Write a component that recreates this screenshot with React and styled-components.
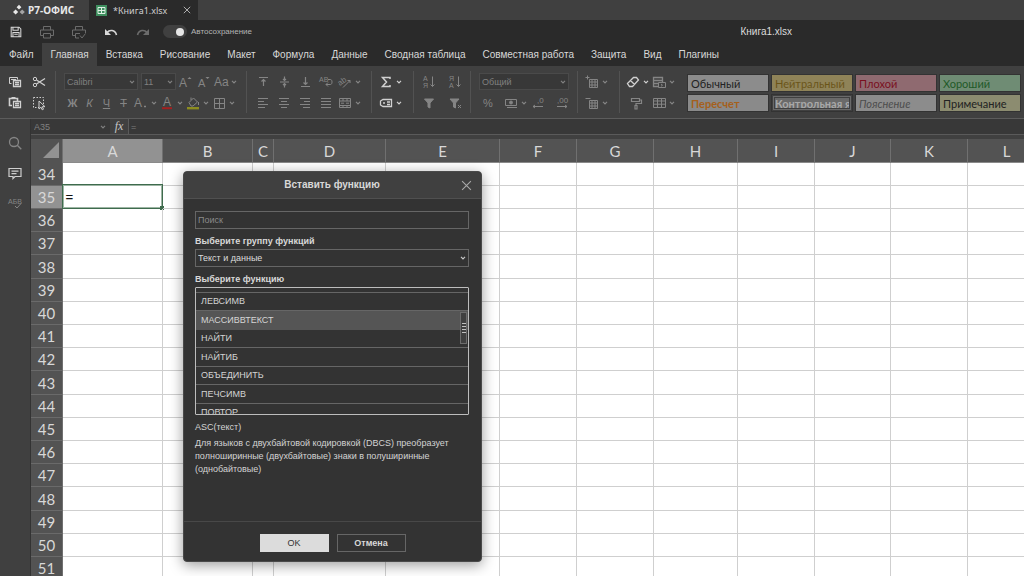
import React from 'react';
import styled, { createGlobalStyle, css } from 'styled-components';

const Global = createGlobalStyle`
  *, *::before, *::after { box-sizing: border-box; }
  body { margin: 0; background: #404040; font-family: "Liberation Sans", Arial, sans-serif; font-size: 10px; color: #d8d8d8; }
  button, input, select { font-family: inherit; font-size: inherit; color: inherit; margin: 0; }
`;

const Page = styled.div`
  position: relative;
  display: flex;
  flex-direction: column;
  height: 100vh;
  min-height: 570px;
  overflow: hidden;
`;

const Plain = styled.button`
  border: 0;
  padding: 0;
  background: none;
  display: inline-flex;
  align-items: center;
  justify-content: center;
  color: inherit;
`;

/* window tabs */
const TabStrip = styled.div`
  display: flex;
  height: 20px;
  flex: none;
  background: #404040;
`;
const Brand = styled.div`
  display: flex;
  align-items: center;
  gap: 3px;
  width: 89px;
  padding-left: 13px;
  font: 700 10px "Noto Sans", sans-serif;
  color: #e8e8e8;
`;
const DocTab = styled.div`
  display: flex;
  align-items: center;
  width: 109px;
  padding: 0 7px;
  background: #2a2a2a;
  font: 9px "Noto Sans", sans-serif;
  color: #cfcfcf;
`;
const DocName = styled.span`
  flex: 1;
  padding-left: 6px;
`;

/* quick access */
const QuickBar = styled.div`
  display: flex;
  align-items: center;
  height: 23px;
  flex: none;
  background: #2a2a2a;
`;
const QuickButton = styled(Plain)`
  width: 32px;
  height: 22px;
  color: ${p => (p.$dim ? '#6c6c6c' : '#d8d8d8')};
  &:first-child { width: 31px; }
`;
const SwitchLabel = styled.label`
  display: flex;
  align-items: center;
  gap: 4px;
  margin-left: 4px;
  font-size: 8px;
  color: #b4b4b4;
`;
const Switch = styled.input`
  appearance: none;
  margin: 0;
  width: 24px;
  height: 13px;
  border-radius: 7px;
  background: #404040;
  display: flex;
  align-items: center;
  justify-content: flex-end;
  padding: 0 3px;
  &::before { content: ''; width: 8px; height: 8px; border-radius: 50%; background: #e6e6e6; }
`;
const FileTitle = styled.div`
  margin-left: auto;
  padding-right: 232px;
  color: #dcdcdc;
`;

/* menu */
const Menu = styled.nav`
  display: flex;
  height: 23px;
  flex: none;
  background: #2a2a2a;
`;
const MenuTab = styled(Plain)`
  padding: 0 8px 0 9px;
  white-space: nowrap;
  color: #d8d8d8;
  background: ${p => (p.$active ? '#404040' : 'none')};
`;

/* ribbon */
const Ribbon = styled.div`
  display: flex;
  height: 53px;
  flex: none;
  padding: 5px 4px 5px 0;
  background: #404040;
  border-bottom: 1px solid #5c5c5c;
`;
const Group = styled.div`
  display: flex;
  flex-direction: column;
  flex: none;
  padding: 0 ${p => p.$r}px 0 ${p => p.$l}px;
  border-right: ${p => (p.$last ? 0 : '1px solid #525252')};
`;
const ToolRow = styled.div`
  display: flex;
  align-items: center;
  height: 22px;
`;
const Tool = styled(Plain)`
  width: ${p => p.$w}px;
  height: 20px;
  gap: 2px;
  color: ${p => (p.$on ? '#d0d0d0' : '#858585')};
  ${p => p.$caret && css`justify-content: flex-end; padding-right: 1px;`}
`;
const FieldBox = styled.span`
  position: relative;
  display: inline-flex;
  width: ${p => p.$w}px;
  margin-right: ${p => p.$gap || 0}px;
`;
const FieldSelect = styled.select`
  appearance: none;
  width: 100%;
  height: 17px;
  padding: 0 2px;
  border: 1px solid #4a4a4a;
  border-radius: 0;
  background: #383838;
  color: #808080;
  font-size: 9px;
`;
const FieldCaret = styled.span`
  position: absolute;
  right: ${p => p.$right || 3}px;
  top: 0;
  bottom: 0;
  display: flex;
  align-items: center;
  color: ${p => p.$color || '#808080'};
  pointer-events: none;
`;
const Styles = styled.div`
  flex: 1;
  display: grid;
  grid-template-columns: repeat(4, minmax(0, 1fr));
  grid-template-rows: 16px 16px;
  gap: 4px;
  padding-top: 4px;
`;
const StyleTile = styled(Plain)`
  justify-content: flex-start;
  padding-left: 3px;
  overflow: hidden;
  white-space: nowrap;
  font: ${p => p.$font || ''} 11px Lato, sans-serif;
  color: ${p => p.$fg};
  background: ${p => p.$bg};
  outline: 1px solid #333;
  ${p => p.$double && css`border: 3px double #404040; padding-left: 0;`}
`;

/* workspace */
const Work = styled.div`
  display: flex;
  flex: 1;
  min-height: 0;
`;
const Rail = styled.aside`
  display: flex;
  flex-direction: column;
  align-items: center;
  width: 31px;
  flex: none;
  padding-top: 9px;
  background: #404040;
  border-right: 1px solid #333;
`;
const RailButton = styled(Plain)`
  width: 30px;
  height: 30px;
  color: ${p => (p.$on ? '#cfcfcf' : '#858585')};
`;
const Main = styled.main`
  flex: 1;
  min-width: 0;
  overflow: hidden;
  background: #fff;
`;
const FormulaBar = styled.div`
  display: flex;
  align-items: center;
  height: 16px;
  background: #383838;
  border-bottom: 1px solid #5a5a5a;
  color: #808080;
  font-size: 9px;
`;
const NameBox = styled.input`
  width: 100%;
  height: 15px;
  border: 0;
  padding: 0 3px;
  background: none;
`;
const Fx = styled(Plain)`
  width: 18px;
  height: 15px;
  background: #404040;
  font: italic 12px "Liberation Serif", serif;
  color: #c8c8c8;
`;
const FormulaInput = styled.input`
  flex: 1;
  height: 15px;
  border: 0;
  border-left: 1px solid #5a5a5a;
  padding: 0 2px;
  background: none;
`;
const Sheet = styled.table`
  width: 1015px;
  min-width: 100%;
  border-top: 4px solid #404040;
  border-collapse: separate;
  border-spacing: 0;
  table-layout: fixed;
  font-family: Lato, sans-serif;
  font-size: 15px;
  tr { height: 23px; }
  thead tr { height: 24px; }
  tbody tr:nth-child(5n) { height: 24px; }
`;
const Head = styled.th`
  padding: 0;
  line-height: 20px;
  font-weight: 400;
  background: ${p => (p.$sel ? '#929292' : '#535353')};
  color: #d8d8d8;
  border-right: 1px solid #707070;
  border-bottom: 1px solid ${p => (p.scope === 'row' ? '#6a6a6a' : '#8a8a8a')};
`;
const Corner = styled.td`
  padding: 0 3px 3px;
  background: #535353;
  border-right: 1px solid #707070;
  svg { display: block; margin-left: auto; }
`;
const Cell = styled.td`
  position: relative;
  padding: 0 2px;
  line-height: 20px;
  color: #111;
  border-right: 1px solid #cfcfcf;
  border-bottom: 1px solid #cfcfcf;
  ${p => p.$active && css`
    &::before { content: ''; position: absolute; inset: -2px -1px -1px -1px; border: 1px solid #3f6b4d; box-shadow: inset 0 0 0 1px #9db5a4; }
    &::after { content: ''; position: absolute; right: -2px; bottom: -2px; width: 4px; height: 4px; background: #3f6b4d; }
  `}
`;

/* dialog */
const Dialog = styled.section`
  position: absolute;
  left: 183px;
  top: 171px;
  width: 299px;
  height: 391px;
  display: flex;
  flex-direction: column;
  border-radius: 4px;
  background: #333;
  border: 1px solid #4a4a4a;
  box-shadow: 0 3px 14px rgba(0, 0, 0, 0.4);
  overflow: hidden;
`;
const DialogHead = styled.header`
  display: flex;
  align-items: center;
  height: 27px;
  flex: none;
  padding: 0 9px 0 19px;
  background: #404040;
  border-bottom: 1px solid #505050;
`;
const DialogTitle = styled.h1`
  flex: 1;
  margin: 0;
  font-size: 10px;
  line-height: 14px;
  text-align: center;
  color: #d8d8d8;
`;
const CloseButton = styled(Plain)`
  color: #a8a8a8;
`;
const DialogBody = styled.div`
  flex: 1;
  padding: 12px 12px 0 11px;
  font-size: 9px;
`;
const Search = styled.input`
  display: block;
  width: 100%;
  height: 18px;
  padding: 0 2px;
  border: 1px solid #666;
  background: none;
  &::placeholder { color: #8a8a8a; opacity: 1; }
`;
const Label = styled.label`
  display: block;
  margin-top: 6px;
  line-height: 12px;
  font-weight: 700;
  color: #d8d8d8;
`;
const GroupBox = styled.div`
  position: relative;
  margin-top: 2px;
`;
const GroupSelect = styled.select`
  appearance: none;
  display: block;
  width: 100%;
  height: 18px;
  padding: 0 2px;
  border: 1px solid #666;
  border-radius: 0;
  background: #333;
  color: #dcdcdc;
`;
const ListBox = styled.div`
  position: relative;
  height: 128px;
  margin-top: 2px;
  border: 1px solid #bdbdbd;
  border-radius: 1px;
  overflow: hidden;
`;
const List = styled.ul`
  margin: 0;
  padding: 0;
  list-style: none;
`;
const Item = styled.li`
  height: 18px;
  padding-left: 5px;
  line-height: 17px;
  color: #d4d4d4;
  background: ${p => (p.$sel ? '#555' : 'none')};
  border-bottom: 1px solid ${p => (p.$sel ? '#555' : '#666')};
  &:nth-child(odd) { height: 19px; line-height: 18px; }
  &:first-child { height: 5px; }
`;
const Thumb = styled.div`
  position: absolute;
  right: 1px;
  top: 24px;
  width: 7px;
  height: 32px;
  display: flex;
  align-items: center;
  justify-content: center;
  border: 1px solid #6c6c6c;
  background: #404040;
  color: #c0c0c0;
`;
const Text = styled.p`
  margin: ${p => p.$top}px 0 0;
  line-height: 13px;
  color: #d4d4d4;
`;
const DialogFoot = styled.footer`
  display: flex;
  justify-content: center;
  gap: 8px;
  height: 40px;
  flex: none;
  padding-top: 12px;
  border-top: 1px solid #484848;
`;
const DialogButton = styled(Plain)`
  width: 69px;
  height: 18px;
  border: 1px solid ${p => (p.$primary ? '#dcdcdc' : '#666')};
  background: ${p => (p.$primary ? '#dcdcdc' : 'none')};
  color: ${p => (p.$primary ? '#333' : '#d8d8d8')};
  font-size: 9px;
  font-weight: ${p => (p.$primary ? 400 : 700)};
`;

const Svg = ({ children, s = 16, w = s, h = s, vb = `0 0 ${w} ${h}` }) => (
  <svg width={w} height={h} viewBox={vb} fill="none" stroke="currentColor" strokeWidth="1" aria-hidden="true">
    {children}
  </svg>
);
const Caret = () => <Svg w={6} h={4}><path d="M1 .8 3 2.8 5 .8" strokeWidth="1.2" /></Svg>;
const T = ({ x, y, size = 11, children, ...rest }) => (
  <text x={x} y={y} fontSize={size} fill="currentColor" stroke="none" {...rest}>{children}</text>
);

const icons = {
  copy: <><path d="M4.5 9.500h-2v-6h8v2M4 5.500h5" /><path d="M6.500 6.500h7v6h-7zM8 8.500h4M8 10.500h4" strokeWidth="1.300" /></>,
  paste: <><path d="M5 10.500H2.500v-7h8V6M4.500 2.800h4" strokeWidth="1.600" /><path d="M6.500 6.500h7v6h-7zM8 8.500h4M8 10.500h4" strokeWidth="1.300" /></>,
  cut: <><circle cx="4" cy="5" r="1.700" /><circle cx="4" cy="11" r="1.700" /><path d="M5.500 6 14 11.500M5.500 10 14 4.500" strokeWidth="1.300" /></>,
  pick: <><path d="M2.500 2.500h10v10h-10z" strokeDasharray="1.500 1.500" /><path d="M8 6v8l2-1.800 1.200 2.600 1.300-.6-1.200-2.500H14z" fill="#404040" /></>,
  fontUp: <><T x="1" y="13" size="12">A</T><path d="M9.500 5h4L11.500 3z" fill="currentColor" stroke="none" /></>,
  fontDown: <><T x="2" y="13" size="11">A</T><path d="M9.500 3h4L11.500 5z" fill="currentColor" stroke="none" /></>,
  caseAa: <T x="1" y="12" size="12">Aa</T>,
  sub: <><T x="1" y="12" size="12">A</T><path d="M11 11.500h2" strokeWidth="1.500" /></>,
  color: <><T x="4" y="11" size="12">A</T><path d="M3 13.200h10" stroke="#a32020" strokeWidth="2" /></>,
  bucket: <><path d="M4 7.500 8.500 3l4 4-4.500 4h-2zM6 5V2.500M13.500 7v3" /><path d="M2 13.200h12" stroke="#8d8d20" strokeWidth="2.400" /></>,
  border: <path d="M3.500 3.500h10v10h-10zM8.500 3.500v10M3.500 8.500h10" />,
  top: <path d="M4 3.500h9M8.500 12V5M6.500 7.500l2-2 2 2" strokeWidth="1.200" />,
  middle: <path d="M4 8h9M8.500 2.500v4M8.500 13.500v-4M7 5l1.500 1.500L10 5M7 11l1.500-1.500L10 11" strokeWidth="1.200" />,
  bottom: <path d="M4 12.500h9M8.500 3v7M6.500 8.500l2 2 2-2" strokeWidth="1.200" />,
  wrap: <><T x="1" y="8" size="7">AB</T><path d="M10 5.500h2.500c2 0 2 5 0 5H8M10 8.500l-2 2 2 2" /></>,
  rotate: <><T x="1" y="10" size="8" transform="rotate(-35 5 8)">ab</T><path d="M6 13.500 13 6.500M10.500 6.500H13V9" /></>,
  left: <path d="M3 3.500h10M3 6.500h6M3 9.500h10M3 12.500h7" />,
  center: <path d="M3 3.500h10M5 6.500h6M3 9.500h10M5 12.500h6" />,
  right: <path d="M3 3.500h10M7 6.500h6M3 9.500h10M6 12.500h7" />,
  justify: <path d="M3 3.500h10M3 6.500h10M3 9.500h10M3 12.500h10" />,
  merge: <path d="M2.500 3.500h11v9h-11zM2.500 6h11M2.500 10.500h11M6 3.500V6M10 3.500V6M6 10.500v2M10 10.500v2M4 8.200h3M9 8.200h3" />,
  sum: <path d="M12 5V3.500H4.500L8.500 8l-4 4.500H12V11" strokeWidth="1.500" />,
  named: <><path d="M5 4.500h8.500v7H5L2.500 10V6z" strokeWidth="1.300" /><path d="M5 8h2M9 7h3M9 9.500h3" strokeWidth="1.300" /></>,
  sortAz: <><T x="2" y="7" size="7">А</T><T x="2" y="14" size="7">Я</T><path d="M11.500 2.500v10M9.500 10.500l2 2 2-2" /></>,
  sortZa: <><T x="2" y="7" size="7">Я</T><T x="2" y="14" size="7">А</T><path d="M11.500 2.500v10M9.500 10.500l2 2 2-2" /></>,
  filter: <path d="M3.500 4h9L9 8v5L7 12V8z" fill="currentColor" />,
  filterOff: <><path d="M3 4h9L8.500 8v5l-2-1V8z" fill="currentColor" /><path d="M11 10l3 3M14 10l-3 3" /></>,
  percent: <T x="3" y="12" size="11">%</T>,
  money: <><path d="M2.500 4.500h11v6h-11zM4 12.500h10" /><circle cx="8" cy="7.500" r="1.500" fill="currentColor" /></>,
  decLess: <><T x="7" y="8" size="8">,0</T><path d="M3 11.500h10M5 10l-2 1.500L5 13" /></>,
  decMore: <><T x="3" y="8" size="8">,00</T><path d="M3 11.500h10M11 10l2 1.500L11 13" /></>,
  insertCells: <path d="M5.500 5.500h8v8h-8zM5.500 8h8M5.500 11h8M8 5.500v8M11 5.500v8M1.500 3.500h4M3.500 1.500v4" />,
  deleteCells: <path d="M5.500 5.500h8v8h-8zM5.500 8h8M5.500 11h8M8 5.500v8M11 5.500v8M1.500 3.500h5" />,
  eraser: <path d="M2.500 9.500 8.500 3.500h3l2 2.500-6 6.500h-3zM5.500 6.500l4 4" strokeWidth="1.300" />,
  cond: <><path d="M2.500 3.500h9v9h-9zM2.500 6.500h9M2.500 9.500h5" strokeWidth="1.300" /><path d="M7.500 8.500h7v5h-7zM10 10l1.500 1.200L10 12.300" fill="#404040" /></>,
  brush: <path d="M3.500 3.500h8v3h-8zM11.500 5h2v3.500H8V10M7 10.500h2v3.500H7z" strokeWidth="1.200" />,
  table: <path d="M2.500 3.500h12v9h-12zM2.500 6h12M2.500 9.200h12M6.500 3.500v9M10.500 3.500v9" />,
  save: <path d="M2.500 2.500h9l2 2v9h-11zM4.500 2.500v3.500h6V2.500M4.500 13.500v-5h7v5M6 10.500h4" strokeWidth="1.200" />,
  print: <path d="M4.500 6V2.500h7V6M4.500 11.500h-3V6h13v5.500h-3M4.500 9.500h7v4.500h-7z" />,
  printQuick: <path d="M4.500 6V2.500h7V6M4.500 11.500h-3V6h13v3M8 14H4.500V9.500H9M9 11.500l2 2.500 3.500-4.500" />,
  undo: <><path d="M4 8.500C6.500 5.500 12 5.500 13.500 11" strokeWidth="1.600" /><path d="M2 5v6h6z" fill="currentColor" stroke="none" /></>,
  redo: <><path d="M12 8.500C9.500 5.500 4 5.500 2.500 11" strokeWidth="1.600" /><path d="M14 5v6H8z" fill="currentColor" stroke="none" /></>,
  search: <><circle cx="7" cy="7" r="4.500" strokeWidth="1.300" /><path d="m10.300 10.300 4 4" strokeWidth="1.300" /></>,
  comment: <path d="M2 3.500h12v8H8L6 13.500v-2H2zM4.500 6.200h7M4.500 8.700h5" strokeWidth="1.200" />,
  spell: <><T x="1" y="9" size="7">АБВ</T><path d="m8 11 2 2 4-4.500" /></>,
};
const Icon = ({ n }) => <Svg>{icons[n]}</Svg>;

const B = ({ n, w, caret, on, label, children }) => (
  <Tool type="button" $w={w} $caret={caret} $on={on} aria-label={label || n}>
    {children || <Icon n={n} />}
    {caret && <Caret />}
  </Tool>
);

const Letter = styled.span`
  font-size: 11px;
  font-weight: ${p => (p.$k === 'b' ? 700 : 400)};
  font-style: ${p => (p.$k === 'i' ? 'italic' : 'normal')};
  text-decoration: ${p => ({ u: 'underline', s: 'line-through' }[p.$k] || 'none')};
`;

const Field = ({ w, gap, label, value }) => (
  <FieldBox $w={w} $gap={gap}>
    <FieldSelect aria-label={label} defaultValue={value}><option>{value}</option></FieldSelect>
    <FieldCaret><Caret /></FieldCaret>
  </FieldBox>
);

const Cross = ({ s }) => <Svg s={s} vb="0 0 10 10"><path d="m1 1 8 8M9 1 1 9" /></Svg>;

const menu = ['Файл', 'Главная', 'Вставка', 'Рисование', 'Макет', 'Формула', 'Данные', 'Сводная таблица', 'Совместная работа', 'Защита', 'Вид', 'Плагины'];
const tiles = [
  { t: 'Обычный', fg: '#222', bg: '#8c8c8c' },
  { t: 'Нейтральный', fg: '#6b5518', bg: '#8f8358' },
  { t: 'Плохой', fg: '#7a1020', bg: '#8f6a70' },
  { t: 'Хороший', fg: '#1f5a28', bg: '#6f8c74' },
  { t: 'Пересчет', fg: '#a5601c', bg: '#8a8a8a', font: '700' },
  { t: 'Контрольная ячейка', fg: '#a8a8a8', bg: '#6a6a6a', font: '700', double: true },
  { t: 'Пояснение', fg: '#4c4c4c', bg: '#8c8c8c', font: 'italic' },
  { t: 'Примечание', fg: '#222', bg: '#8c8c70' },
];
const cols = [['A', 100], ['B', 90], ['C', 21], ['D', 112], ['E', 114], ['F', 77], ['G', 77], ['H', 84], ['I', 77], ['J', 76], ['K', 77], ['L', 78]];
const rows = Array.from({ length: 18 }, (_, i) => 34 + i);
const functions = ['', 'ЛЕВСИМВ', 'МАССИВВТЕКСТ', 'НАЙТИ', 'НАЙТИБ', 'ОБЪЕДИНИТЬ', 'ПЕЧСИМВ', 'ПОВТОР'];

export default function App() {
  return (
    <Page>
      <Global />
      <TabStrip>
        <Brand>
          <Svg w={12} h={12}>
            <g fill="currentColor" stroke="none">
              <path d="m6 .8 2.400 2.400L6 5.600 3.600 3.200zM2.600 5.400 5.200 8l-2.600 2.600L0 8z" />
              <path d="m9.200 5.400L11.800 8l-2.600 2.600L6.600 8z" opacity=".6" />
            </g>
          </Svg>
          Р7-ОФИС
        </Brand>
        <DocTab>
          <Svg s={11}><path d="M0 0h11v11H0z" fill="#3f8f5f" stroke="none" /><path d="M2 2.500h7v6H2zM5.500 2.500v6M2 5.500h7" stroke="#e0f0e6" /></Svg>
          <DocName>*Книга1.xlsx</DocName>
          <Plain type="button" aria-label="Закрыть вкладку"><Cross s={8} /></Plain>
        </DocTab>
      </TabStrip>
      <QuickBar>
        <QuickButton type="button" aria-label="Сохранить"><Svg s={14} vb="0 0 16 16">{icons.save}</Svg></QuickButton>
        <QuickButton type="button" $dim aria-label="Печать"><Icon n="print" /></QuickButton>
        <QuickButton type="button" $dim aria-label="Быстрая печать"><Icon n="printQuick" /></QuickButton>
        <QuickButton type="button" aria-label="Отменить"><Icon n="undo" /></QuickButton>
        <QuickButton type="button" $dim aria-label="Повторить"><Icon n="redo" /></QuickButton>
        <SwitchLabel><Switch type="checkbox" role="switch" defaultChecked />Автосохранение</SwitchLabel>
        <FileTitle>Книга1.xlsx</FileTitle>
      </QuickBar>
      <Menu>
        {menu.map(m => <MenuTab type="button" key={m} $active={m === 'Главная'}>{m}</MenuTab>)}
      </Menu>
      <Ribbon>
        <Group $l={3} $r={4}>
          <ToolRow><B n="copy" w={24} on /><B n="cut" w={24} on /></ToolRow>
          <ToolRow><B n="paste" w={24} on /><B n="pick" w={24} on /></ToolRow>
        </Group>
        <Group $l={8} $r={8}>
          <ToolRow>
            <Field w={74} gap={3} label="Шрифт" value="Calibri" />
            <Field w={35} label="Размер шрифта" value="11" />
            <B n="fontUp" w={19} /><B n="fontDown" w={17} /><B n="caseAa" w={26} caret />
          </ToolRow>
          <ToolRow>
            <B w={17} label="Полужирный"><Letter $k="b">Ж</Letter></B>
            <B w={17} label="Курсив"><Letter $k="i">К</Letter></B>
            <B w={17} label="Подчёркнутый"><Letter $k="u">Ч</Letter></B>
            <B w={17} label="Зачёркнутый"><Letter $k="s">Т</Letter></B>
            <B n="sub" w={26} caret /><B n="color" w={26} caret /><B n="bucket" w={26} caret /><B n="border" w={26} caret />
          </ToolRow>
        </Group>
        <Group $l={5} $r={9}>
          <ToolRow><B n="top" w={21} /><B n="middle" w={21} /><B n="bottom" w={21} /><B n="wrap" w={21} /><B n="rotate" w={26} caret /></ToolRow>
          <ToolRow><B n="left" w={21} /><B n="center" w={21} /><B n="right" w={21} /><B n="justify" w={21} /><B n="merge" w={26} caret /></ToolRow>
        </Group>
        <Group $l={5} $r={10}>
          <ToolRow><B n="sum" w={26} caret on /></ToolRow>
          <ToolRow><B n="named" w={26} caret on /></ToolRow>
        </Group>
        <Group $l={2} $r={2}>
          <ToolRow><B n="sortAz" w={26} /><B n="sortZa" w={26} /></ToolRow>
          <ToolRow><B n="filter" w={26} /><B n="filterOff" w={26} /></ToolRow>
        </Group>
        <Group $l={8} $r={1}>
          <ToolRow><Field w={90} label="Числовой формат" value="Общий" /></ToolRow>
          <ToolRow><B n="percent" w={17} /><B n="money" w={32} caret /><B n="decLess" w={20} /><B n="decMore" w={28} /></ToolRow>
        </Group>
        <Group $l={5} $r={10}>
          <ToolRow><B n="insertCells" w={26} caret /></ToolRow>
          <ToolRow><B n="deleteCells" w={26} caret /></ToolRow>
        </Group>
        <Group $l={4} $r={12} $last>
          <ToolRow><B n="eraser" w={26} caret on /><B n="cond" w={26} caret /></ToolRow>
          <ToolRow><B n="brush" w={23} /><B n="table" w={29} caret /></ToolRow>
        </Group>
        <Styles>
          {tiles.map(s => (
            <StyleTile type="button" key={s.t} $fg={s.fg} $bg={s.bg} $font={s.font} $double={s.double}>{s.t}</StyleTile>
          ))}
        </Styles>
      </Ribbon>
      <Work>
        <Rail>
          <RailButton type="button" aria-label="Поиск"><Icon n="search" /></RailButton>
          <RailButton type="button" $on aria-label="Комментарии"><Icon n="comment" /></RailButton>
          <RailButton type="button" aria-label="Проверка орфографии"><Icon n="spell" /></RailButton>
        </Rail>
        <Main>
          <FormulaBar>
            <FieldBox $w={78} $gap={1}>
              <NameBox aria-label="Имя ячейки" defaultValue="A35" />
              <FieldCaret><Caret /></FieldCaret>
            </FieldBox>
            <Fx type="button">fx</Fx>
            <FormulaInput aria-label="Строка формул" defaultValue="=" />
          </FormulaBar>
          <Sheet>
            <colgroup>
              <col width="32" />
              {cols.map(([c, w]) => <col key={c} width={w} />)}
            </colgroup>
            <thead>
              <tr>
                <Corner><Svg w={16} h={16}><path d="M16 0v16H0z" fill="#929292" stroke="none" /></Svg></Corner>
                {cols.map(([c]) => <Head scope="col" key={c} $sel={c === 'A'}>{c}</Head>)}
              </tr>
            </thead>
            <tbody>
              {rows.map(r => (
                <tr key={r}>
                  <Head scope="row" $sel={r === 35}>{r}</Head>
                  {cols.map(([c]) => {
                    const active = r === 35 && c === 'A';
                    return <Cell key={c} $active={active}>{active ? '=' : null}</Cell>;
                  })}
                </tr>
              ))}
            </tbody>
          </Sheet>
        </Main>
      </Work>
      <Dialog role="dialog" aria-labelledby="dialog-title">
        <DialogHead>
          <DialogTitle id="dialog-title">Вставить функцию</DialogTitle>
          <CloseButton type="button" aria-label="Закрыть"><Cross s={11} /></CloseButton>
        </DialogHead>
        <DialogBody>
          <Search type="text" placeholder="Поиск" aria-label="Поиск" />
          <Label htmlFor="fn-group">Выберите группу функций</Label>
          <GroupBox>
            <GroupSelect id="fn-group" defaultValue="Текст и данные"><option>Текст и данные</option></GroupSelect>
            <FieldCaret $color="#c8c8c8"><Caret /></FieldCaret>
          </GroupBox>
          <Label as="div" id="fn-list">Выберите функцию</Label>
          <ListBox>
            <List role="listbox" aria-labelledby="fn-list">
              {functions.map(f => (
                <Item key={f} role="option" aria-selected={f === 'МАССИВВТЕКСТ'} $sel={f === 'МАССИВВТЕКСТ'}>{f}</Item>
              ))}
            </List>
            <Thumb><Svg w={4} h={12}><path d="M0 1.500h4M0 4.500h4M0 7.500h4M0 10.500h4" /></Svg></Thumb>
          </ListBox>
          <Text $top={6}>ASC(текст)</Text>
          <Text $top={3}>Для языков с двухбайтовой кодировкой (DBCS) преобразует полноширинные (двухбайтовые) знаки в полуширинные (однобайтовые)</Text>
        </DialogBody>
        <DialogFoot>
          <DialogButton type="button" $primary>OK</DialogButton>
          <DialogButton type="button">Отмена</DialogButton>
        </DialogFoot>
      </Dialog>
    </Page>
  );
}
